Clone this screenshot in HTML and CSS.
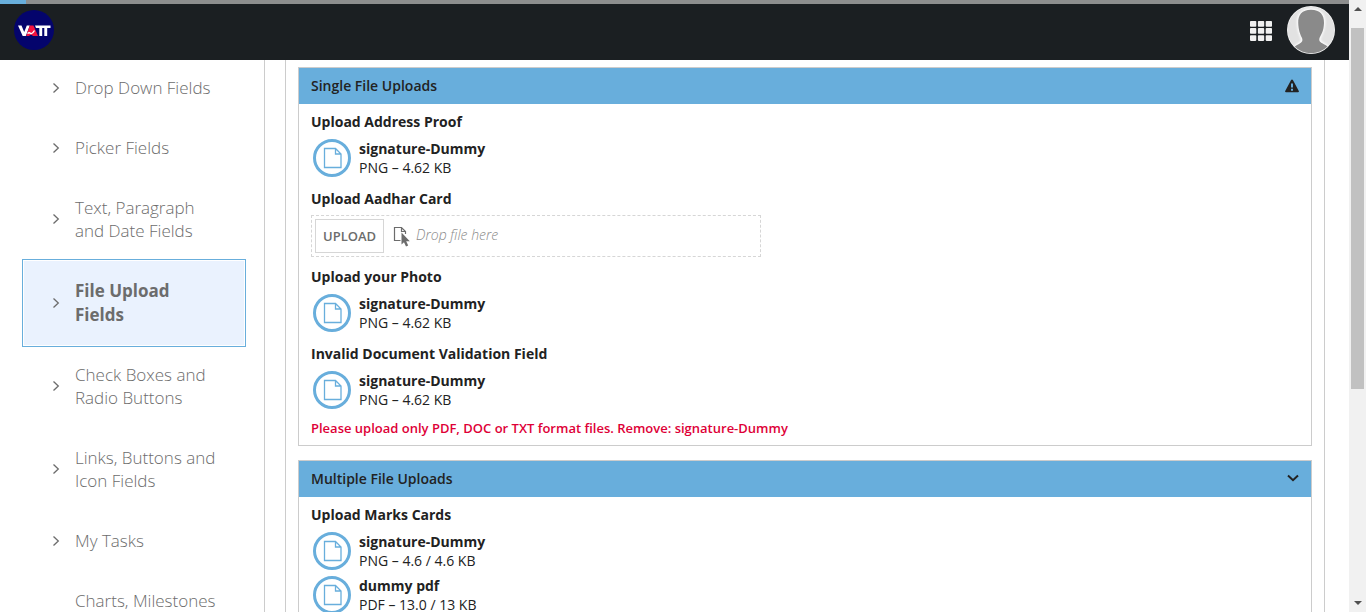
FILE: index.html
```html
<!DOCTYPE html>
<html lang="en">
<head>
<meta charset="utf-8">
<meta name="viewport" content="width=device-width, initial-scale=1">
<title>File Upload Fields</title>
<link rel="stylesheet" href="styles.css">
</head>
<body>
<svg class="defs" width="0" height="0" aria-hidden="true">
  <symbol id="chevron" viewBox="0 0 8 12"><path d="M1.500 1.500 6.300 6 1.500 10.500" fill="none" stroke="currentColor" stroke-width="1.300"/></symbol>
  <symbol id="document" viewBox="0 0 38 38">
    <circle cx="19" cy="19" r="17.500" fill="#fff" stroke="currentColor" stroke-width="3"/>
    <path d="M11.500 9.500h11l5.500 5.500v13.500H11.500zM22.500 9.500V15H28" fill="none" stroke="currentColor" stroke-width="1.300"/>
  </symbol>
</svg>
<div class="shell">
  <div class="page">
    <div class="progress"><div class="progress-fill"></div></div>
    <header class="topbar">
      <a class="logo" href="#" aria-label="Home">
        <svg width="40" height="40" viewBox="0 0 40 40">
          <circle cx="20" cy="20" r="20" fill="#04046c"/>
          <path d="M4 15.500h3.500l2.700 6.500 2.600-6.500h3L11.800 26H8.700zM21 15.500H36.500v2.600h-3.300V26h-2.900v-7.900h-2.100V26h-2.900v-7.900H22z" fill="#fff"/>
          <path d="M15.800 15.500h3.700L24 26H12.200z" fill="#f5133f"/>
          <path d="M13.500 23.500c2-1.500 2.500-.500 3.500.300 1.500-.500 2.500-1.600 3.500-3.300" fill="none" stroke="#fff" stroke-width="1.400"/>
          <path d="M14.500 26.200 17 24.600 19.500 26.200z" fill="#04046c"/>
        </svg>
      </a>
      <div class="tools">
        <button class="icon-button" type="button" aria-label="Applications">
          <svg width="22" height="22" viewBox="0 0 22 22" fill="#f1f1f1">
            <rect y="2" width="6.300" height="5.700" rx=".8"/><rect x="7.900" y="2" width="6.300" height="5.700" rx=".8"/><rect x="15.700" y="2" width="6.300" height="5.700" rx=".8"/>
            <rect y="9.100" width="6.300" height="5.700" rx=".8"/><rect x="7.900" y="9.100" width="6.300" height="5.700" rx=".8"/><rect x="15.700" y="9.100" width="6.300" height="5.700" rx=".8"/>
            <rect y="16.200" width="6.300" height="5.700" rx=".8"/><rect x="7.900" y="16.200" width="6.300" height="5.700" rx=".8"/><rect x="15.700" y="16.200" width="6.300" height="5.700" rx=".8"/>
          </svg>
        </button>
        <button class="icon-button" type="button" aria-label="User profile">
          <svg width="48" height="48" viewBox="0 0 48 48">
            <defs>
              <clipPath id="face"><circle cx="24" cy="24" r="23.300"/></clipPath>
              <filter id="glow"><feGaussianBlur stdDeviation="1.200"/></filter>
            </defs>
            <circle cx="24" cy="24" r="24" fill="#f5f5f5"/>
            <g clip-path="url(#face)">
              <rect width="48" height="48" fill="#e2e2e2"/>
              <path d="M24 3.800C33 3.800 37.300 9 37 17c-.300 8-2.500 11-4.500 15-.800 3 .500 4 4 6 4 2 7 4 8 10H4c1-6 4-8 8-10 3-2 4-3 3-6-2-4-3.500-8-3.800-15C11 9 15 3.800 24 3.800z" fill="#fff" stroke="#fff" stroke-width="2.500" filter="url(#glow)"/>
              <path d="M24 3.800C33 3.800 37.300 9 37 17c-.300 8-2.500 11-4.500 15-.800 3 .500 4 4 6 4 2 7 4 8 10H4c1-6 4-8 8-10 3-2 4-3 3-6-2-4-3.500-8-3.800-15C11 9 15 3.800 24 3.800z" fill="#8a8a8a"/>
            </g>
          </svg>
        </button>
      </div>
    </header>
    <div class="content">
      <nav class="sidebar" aria-label="Sections">
        <ul class="nav-list">
          <li><a class="nav-item" href="#"><svg class="chevron"><use href="#chevron"/></svg><span>Drop Down Fields</span></a></li>
          <li><a class="nav-item" href="#"><svg class="chevron"><use href="#chevron"/></svg><span>Picker Fields</span></a></li>
          <li><a class="nav-item" href="#"><svg class="chevron"><use href="#chevron"/></svg><span>Text, Paragraph and Date Fields</span></a></li>
          <li><a class="nav-item active" href="#" aria-current="page"><svg class="chevron"><use href="#chevron"/></svg><span>File Upload Fields</span></a></li>
          <li><a class="nav-item" href="#"><svg class="chevron"><use href="#chevron"/></svg><span>Check Boxes and Radio Buttons</span></a></li>
          <li><a class="nav-item" href="#"><svg class="chevron"><use href="#chevron"/></svg><span>Links, Buttons and Icon Fields</span></a></li>
          <li><a class="nav-item" href="#"><svg class="chevron"><use href="#chevron"/></svg><span>My Tasks</span></a></li>
          <li><a class="nav-item no-marker" href="#"><span>Charts, Milestones</span></a></li>
        </ul>
      </nav>
      <main class="main">
        <section class="panel">
          <div class="panel-head">
            <h2>Single File Uploads</h2>
            <button class="icon-button" type="button" aria-label="Section has errors">
              <svg width="14" height="14" viewBox="0 0 14 14"><path d="M7 .500c.400 0 .700.200.900.600L13.800 12c.300.700 0 1.300-.800 1.300H1c-.800 0-1.100-.600-.800-1.300L6.100 1.100C6.300.700 6.600.500 7 .500z" fill="#222"/><path d="M6 4.500h2v4H6zM6 9.800h2v1.900H6z" fill="#68aedc"/></svg>
            </button>
          </div>
          <div class="panel-body">
            <div class="field">
              <h3>Upload Address Proof</h3>
              <div class="file"><svg class="file-icon"><use href="#document"/></svg><div><a class="file-name" href="#">signature-Dummy</a><div>PNG – 4.62 KB</div></div></div>
            </div>
            <div class="field">
              <h3 id="aadhar">Upload Aadhar Card</h3>
              <div class="dropzone">
                <button class="upload" type="button" aria-describedby="aadhar">UPLOAD</button>
                <svg width="17" height="21" viewBox="0 0 17 21"><path d="M7.500 14.500H1.500v-13h7l4 4V8M8.500 1.500v4h4" fill="none" stroke="#6c6c6c" stroke-width="1.200"/><path d="M8.500 6.500v12l2.500-2.300 2 4.300 2.200-1-2-4.200h3.600z" fill="#6c6c6c"/></svg>
                <span class="hint">Drop file here</span>
              </div>
            </div>
            <div class="field">
              <h3>Upload your Photo</h3>
              <div class="file"><svg class="file-icon"><use href="#document"/></svg><div><a class="file-name" href="#">signature-Dummy</a><div>PNG – 4.62 KB</div></div></div>
            </div>
            <div class="field">
              <h3>Invalid Document Validation Field</h3>
              <div class="file"><svg class="file-icon"><use href="#document"/></svg><div><a class="file-name" href="#">signature-Dummy</a><div>PNG – 4.62 KB</div></div></div>
              <p class="error" role="alert">Please upload only PDF, DOC or TXT format files. Remove: signature-Dummy</p>
            </div>
          </div>
        </section>
        <section class="panel">
          <div class="panel-head">
            <h2>Multiple File Uploads</h2>
            <button class="icon-button" type="button" aria-label="Collapse section" aria-expanded="true">
              <svg width="12" height="10" viewBox="0 0 12 10"><path d="M1 1.500 6 6.200 11 1.500" fill="none" stroke="#222" stroke-width="2"/></svg>
            </button>
          </div>
          <div class="panel-body">
            <div class="field">
              <h3>Upload Marks Cards</h3>
              <div class="file"><svg class="file-icon"><use href="#document"/></svg><div><a class="file-name" href="#">signature-Dummy</a><div>PNG – 4.6 / 4.6 KB</div></div></div>
              <div class="file"><svg class="file-icon"><use href="#document"/></svg><div><a class="file-name" href="#">dummy pdf</a><div>PDF – 13.0 / 13 KB</div></div></div>
            </div>
          </div>
        </section>
      </main>
    </div>
  </div>
  <div class="scrollbar" aria-hidden="true">
    <svg width="8" height="4" viewBox="0 0 8 4"><path d="M4 0 8 4H0z" fill="#505050"/></svg>
    <div class="track"><div class="thumb"></div></div>
    <svg width="8" height="4" viewBox="0 0 8 4"><path d="M0 0h8L4 4z" fill="#505050"/></svg>
  </div>
</div>
</body>
</html>
```

FILE: styles.css
```css
* { box-sizing: border-box; }

body {
  margin: 0;
  color: #222;
  background: #fff;
  font: 14px/19px "Open Sans", "Noto Sans", sans-serif;
}

h2, h3, p, ul { margin: 0; padding: 0; font-size: inherit; }
a { color: inherit; text-decoration: none; }
button { font: inherit; color: inherit; cursor: pointer; }
svg { display: block; flex: none; }
.defs { position: absolute; }

.shell { display: flex; height: 100vh; overflow: hidden; }
.page { flex: 1; min-width: 0; display: flex; flex-direction: column; }

.progress { flex: none; height: 4px; background: #8d8e8e; }
.progress-fill { width: 26px; height: 100%; background: #68aedc; }

.topbar {
  flex: none;
  display: flex;
  align-items: center;
  justify-content: space-between;
  height: 56px;
  padding: 0 14px;
  background: #1b1f22;
}
.logo { margin-bottom: 4px; }
.tools { display: flex; align-items: center; gap: 15px; margin-bottom: 4px; }
.icon-button { padding: 0; border: 0; background: none; }

.content { flex: 1; min-height: 0; display: flex; overflow: hidden; }

.sidebar {
  flex: none;
  width: 265px;
  padding: 0 20px 0 24px;
  border-right: 1px solid #ccc;
}
.nav-list { list-style: none; margin-top: -2px; }
.nav-item {
  display: flex;
  align-items: center;
  gap: 15px;
  padding: 18px 24px 19px 28px;
  color: #6c6c6c;
  font-size: 17px;
  font-weight: 300;
  line-height: 23px;
}
.nav-item.active {
  padding-bottom: 18px;
  font-weight: 700;
  line-height: 24px;
  background: #eaf2fe;
  outline: 1px solid #68aedc;
  outline-offset: 1px;
}
.nav-item.no-marker { padding-left: 51px; padding-right: 0; }
.chevron { width: 8px; height: 12px; }

.main {
  flex: 1;
  min-width: 0;
  display: flex;
  flex-direction: column;
  gap: 14px;
  margin: 0 24px 0 20px;
  padding: 7px 12px;
  border: solid #ccc;
  border-width: 0 1px;
}
.panel { flex: none; border: 1px solid #ccc; }
.panel-head {
  display: flex;
  align-items: center;
  justify-content: space-between;
  height: 36px;
  padding: 0 12px;
  background: #68aedc;
}
.panel-head h2 { padding-bottom: 2px; font-weight: 600; }
.panel-body {
  display: flex;
  flex-direction: column;
  gap: 10px;
  padding: 8px 12px 7px;
}
.field h3 { margin-bottom: 7px; font-weight: 700; }

.file {
  display: flex;
  align-items: center;
  gap: 8px;
  padding: 1px 2px 2px;
}
.file + .file { margin-top: 3px; }
.file-icon { width: 38px; height: 38px; color: #68aedc; }
.file-name { display: block; font-weight: 700; }

.dropzone {
  display: flex;
  align-items: center;
  max-width: 450px;
  height: 42px;
  padding: 0 3px;
  border: 1px dashed #d6d6d6;
}
.upload {
  height: 34px;
  margin-right: 9px;
  padding: 0 7px;
  border: 1px solid #d6d6d6;
  background: #fff;
  color: #6c6c6c;
  font-size: 13px;
  font-weight: 600;
}
.hint {
  margin: 0 0 3px 6px;
  color: #8a8a8a;
  font-size: 14px;
  font-style: italic;
  font-weight: 300;
}
.error {
  margin-top: 8px;
  color: #de0037;
  font-size: 13px;
  font-weight: 600;
}

.scrollbar {
  flex: none;
  display: flex;
  flex-direction: column;
  align-items: center;
  gap: 9px;
  width: 17px;
  padding: 7px 0;
  background: #f1f1f1;
}
.track { flex: 1; width: 13px; padding-top: 8px; }
.thumb { height: 64%; background: #c1c1c1; }
```
